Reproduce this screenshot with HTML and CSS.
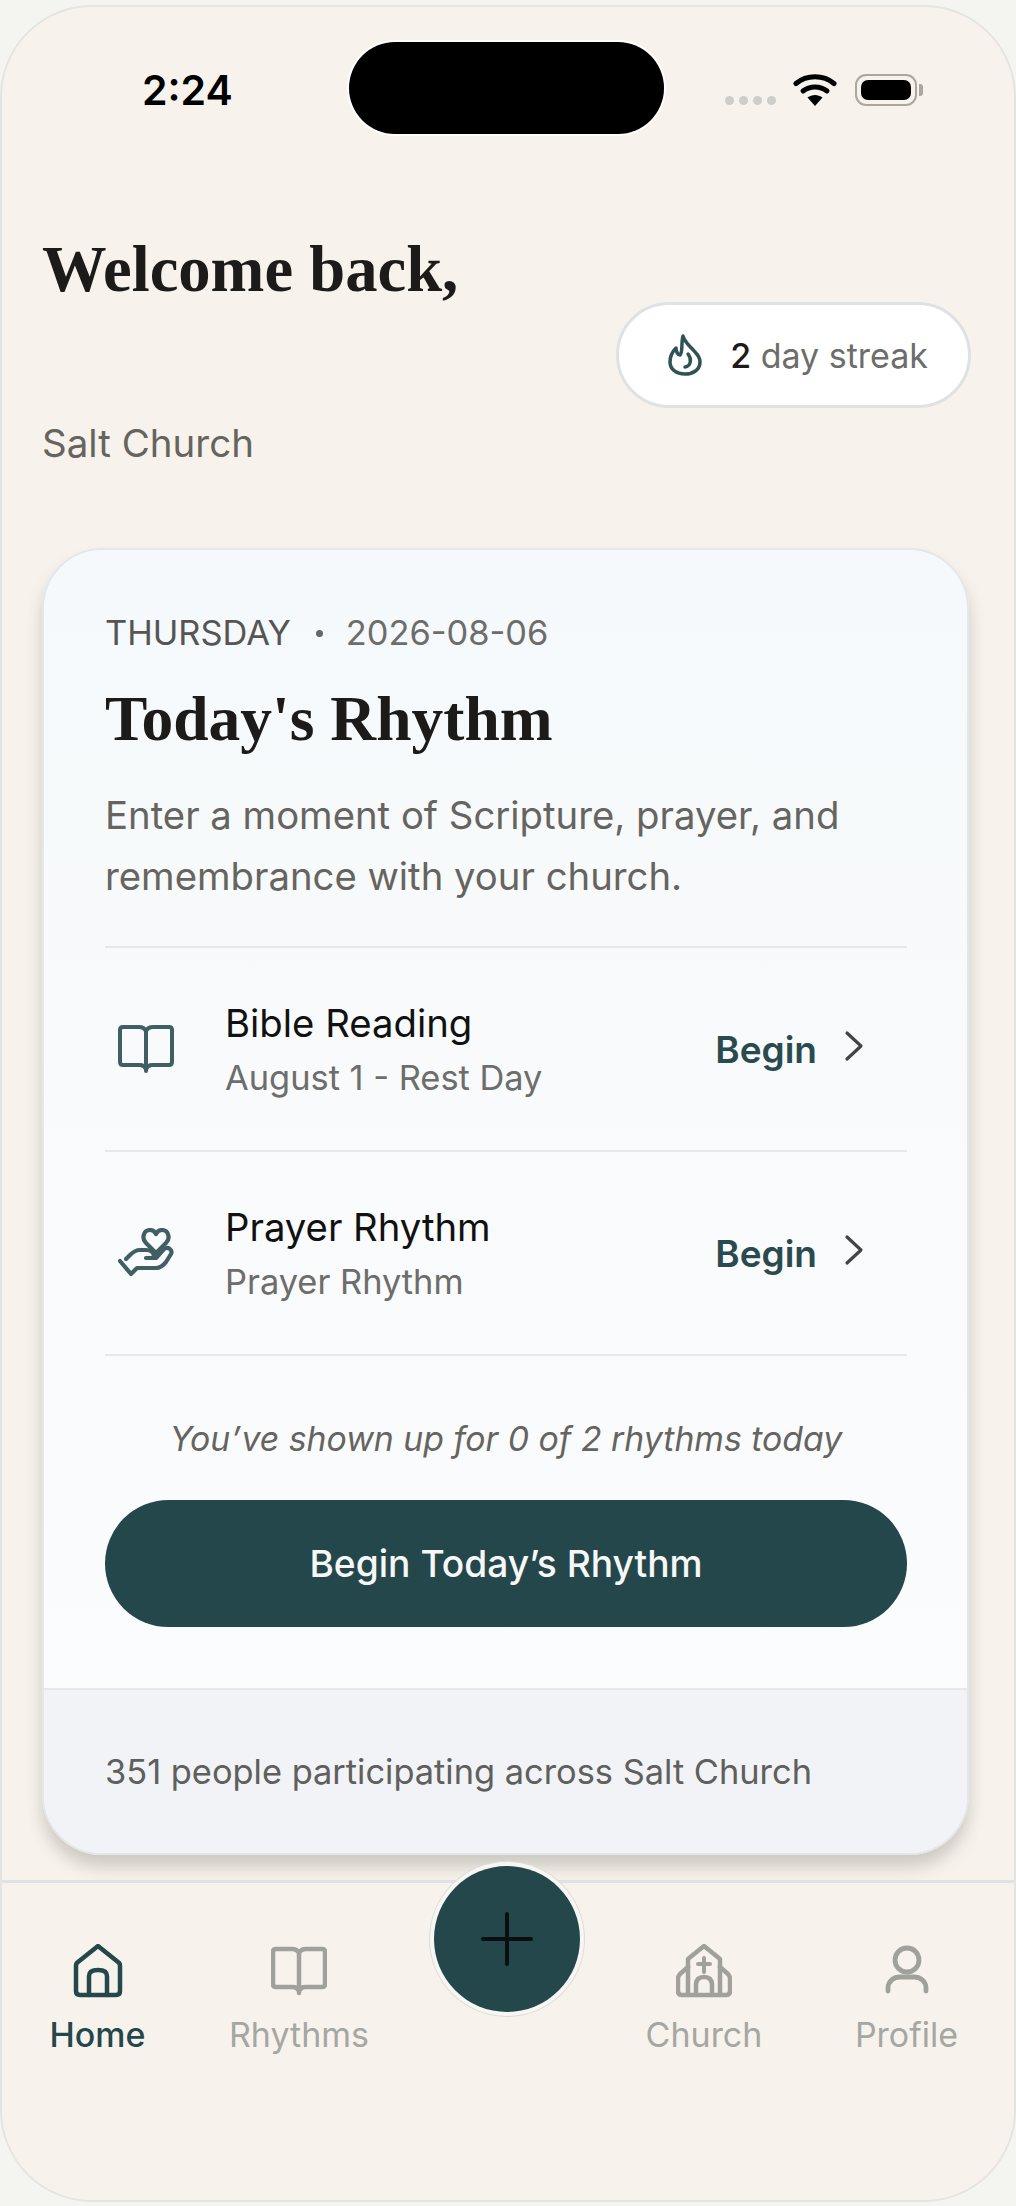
FILE: index.html
```html
<!DOCTYPE html>
<html lang="en">
<head>
  <meta charset="UTF-8" />
  <meta name="viewport" content="width=device-width, initial-scale=1" />
  <title>Salt Church – Home</title>
  <link rel="stylesheet" href="styles.css">
</head>
<body>
  <div class="phone">

    <!-- STATUS BAR -->
    <div class="status-bar">
      <span class="time">2:24</span>
      <div class="island"></div>
      <div class="status-icons">
        <span class="signal"><i></i><i></i><i></i><i></i></span>
        <svg class="wifi" width="44" height="34" viewBox="0 0 44 34" aria-hidden="true">
          <path d="M3 10.500C13.500 1.500 30.500 1.500 41 10.500" fill="none" stroke="#000" stroke-width="5" stroke-linecap="round"/>
          <path d="M10 18C16.500 12.500 27.500 12.500 34 18" fill="none" stroke="#000" stroke-width="5" stroke-linecap="round"/>
          <path d="M14.500 24.500C19 21 25 21 29.500 24.500L22 33Z" fill="#000"/>
        </svg>
        <span class="battery"><span class="battery-fill"></span></span>
      </div>
    </div>

    <!-- HEADER -->
    <header class="welcome">
      <div>
        <h1>Welcome back,</h1>
        <p class="church-name">Salt Church</p>
      </div>
      <div class="streak">
        <svg width="34" height="42" viewBox="0 0 34 42" fill="none" stroke="#2f5257" stroke-width="3.500" stroke-linecap="round" stroke-linejoin="round" aria-hidden="true">
          <path d="M15 2C17 9 22 12 27 18C31 22 32 25 32 28C32 36 25 40 17 40C8 40 2 35 2 28C2 22 5 17 8 14C8 18 10 21 12 21C15 18 13 9 15 2Z"/>
          <path d="M20 20C24 25 23 32 17 33"/>
        </svg>
        <span class="streak-text"><b>2</b> day streak</span>
      </div>
    </header>

    <!-- RHYTHM CARD -->
    <section class="card">
      <div class="card-body">
        <p class="date"><span class="day">THURSDAY</span><span class="dot"></span><span>2026-08-06</span></p>
        <h2>Today's Rhythm</h2>
        <p class="intro">Enter a moment of Scripture, prayer, and remembrance with your church.</p>

        <ul class="rhythm-list">
          <li class="rhythm">
            <svg class="rhythm-icon" width="56" height="48" viewBox="0 0 56 48" fill="none" stroke="#3f5f65" stroke-width="4" stroke-linecap="round" stroke-linejoin="round" aria-hidden="true">
              <path d="M28 6Q26 2 21 2H5Q2 2 2 5V37Q2 40 5 40H22Q26 40 28 44Q30 40 34 40H51Q54 40 54 37V5Q54 2 51 2H35Q30 2 28 6ZM28 6V46"/>
            </svg>
            <div class="rhythm-text">
              <h3>Bible Reading</h3>
              <p>August 1 - Rest Day</p>
            </div>
            <a class="begin" href="#">Begin</a>
            <svg class="chevron" width="20" height="32" viewBox="0 0 20 32" fill="none" stroke="#444" stroke-width="3.200" stroke-linecap="round" stroke-linejoin="round" aria-hidden="true"><path d="M3 3L17 16L3 29"/></svg>
          </li>
          <li class="rhythm">
            <svg class="rhythm-icon" width="56" height="50" viewBox="0 0 56 50" fill="none" stroke="#3f5f65" stroke-width="4.200" stroke-linecap="round" stroke-linejoin="round" aria-hidden="true">
              <path d="M38 25L28 15C23 10 26 2 32 2C35 2 37 4 38 6C39 4 41 2 44 2C50 2 53 10 48 15Z"/>
              <path d="M2 33L13 46L19 40H38C42 40 45 38 48 34L53 26C55 22 50 18 46 21L38 30H28"/>
              <path d="M36 29C36 24 32 22 28 22H22C18 22 15 24 12 27L8 31"/>
            </svg>
            <div class="rhythm-text">
              <h3>Prayer Rhythm</h3>
              <p>Prayer Rhythm</p>
            </div>
            <a class="begin" href="#">Begin</a>
            <svg class="chevron" width="20" height="32" viewBox="0 0 20 32" fill="none" stroke="#444" stroke-width="3.200" stroke-linecap="round" stroke-linejoin="round" aria-hidden="true"><path d="M3 3L17 16L3 29"/></svg>
          </li>
        </ul>

        <p class="progress">You’ve shown up for 0 of 2 rhythms today</p>
        <a class="btn" href="#">Begin Today’s Rhythm</a>
      </div>
      <div class="card-footer">351 people participating across Salt Church</div>
    </section>

    <!-- BOTTOM NAV -->
    <nav class="tabs">
      <a class="tab active" href="#">
        <svg width="50" height="54" viewBox="0 0 50 54" fill="none" stroke="currentColor" stroke-width="4.500" stroke-linecap="round" stroke-linejoin="round" aria-hidden="true">
          <path d="M3 47V22Q3 19 5 18L25 2L45 18Q47 19 47 22V47Q47 51 43 51H7Q3 51 3 47Z"/>
          <path d="M16 51V32Q16 26 25 26Q34 26 34 32V51"/>
        </svg>
        <span>Home</span>
      </a>
      <a class="tab" href="#">
        <svg width="56" height="54" viewBox="0 0 56 48" fill="none" stroke="#a0a09c" stroke-width="4.500" stroke-linecap="round" stroke-linejoin="round" aria-hidden="true">
          <path d="M28 6Q26 2 21 2H5Q2 2 2 5V37Q2 40 5 40H22Q26 40 28 44Q30 40 34 40H51Q54 40 54 37V5Q54 2 51 2H35Q30 2 28 6ZM28 6V46"/>
        </svg>
        <span>Rhythms</span>
      </a>
      <div class="tab-gap"></div>
      <a class="tab" href="#">
        <svg width="56" height="54" viewBox="0 0 56 54" fill="none" stroke="#a0a09c" stroke-width="4.500" stroke-linecap="round" stroke-linejoin="round" aria-hidden="true">
          <path d="M12 50V15L28 2L44 15V50"/>
          <path d="M12 23L4 30Q2 32 2 35V47Q2 51 6 51H50Q54 51 54 47V35Q54 32 52 30L44 23"/>
          <path d="M28 14V28M22 20H34" stroke-width="4"/>
          <path d="M20 51V41Q20 33 28 33Q36 33 36 41V51"/>
        </svg>
        <span>Church</span>
      </a>
      <a class="tab" href="#">
        <svg width="44" height="54" viewBox="0 0 44 54" fill="none" stroke="#a0a09c" stroke-width="4.800" stroke-linecap="round" stroke-linejoin="round" aria-hidden="true">
          <circle cx="22" cy="16" r="12"/>
          <path d="M3 47V44C3 37 9 33 15 33H29C35 33 41 37 41 44V47"/>
        </svg>
        <span>Profile</span>
      </a>
      <button class="fab" type="button" aria-label="Add">
        <svg width="52" height="54" viewBox="0 0 52 54" fill="none" stroke="#0b0f10" stroke-width="4" stroke-linecap="round" aria-hidden="true"><path d="M26 2V52M2 27H50"/></svg>
      </button>
    </nav>
  </div>
</body>
</html>
```

FILE: styles.css
```css
/* Reset & basics */
*, *::before, *::after {
  box-sizing: border-box;
}
body, h1, h2, h3, p, ul {
  margin: 0;
  padding: 0;
}
body {
  font-family: 'Inter', sans-serif;
  background: #f4f4f0;
  color: #1c1b19;
  padding-top: 5px;
}
a {
  text-decoration: none;
  color: inherit;
}

.phone {
  height: 2197px;
  background: #f7f3ec;
  border: 2px solid #e4e5e3;
  border-radius: 92px;
  overflow: hidden;
}

/* STATUS BAR */
.status-bar {
  display: grid;
  grid-template-columns: 347px 315px 1fr;
  align-items: center;
  padding-top: 35px;
}
.time {
  padding: 3px 0 0 140px;
  font-family: 'Inter', sans-serif;
  font-size: 41px;
  font-weight: 600;
  color: #000;
}
.island {
  height: 92px;
  background: #000;
  border-radius: 46px;
  box-shadow: 0 0 0 2px #fff;
}
.status-icons {
  display: flex;
  align-items: center;
  padding: 3px 0 0 61px;
}
.signal {
  display: flex;
  gap: 5px;
  margin-top: 22px;
}
.signal i {
  width: 9px;
  height: 9px;
  border-radius: 50%;
  background: #cfcdc9;
}
.wifi {
  margin-left: 17px;
  margin-right: 18px;
}
.battery {
  position: relative;
  width: 62px;
  height: 32px;
  padding: 4px;
  border: 2px solid #a9a79f;
  border-radius: 11px;
}
.battery::after {
  content: "";
  position: absolute;
  right: -8px;
  top: 8px;
  width: 4px;
  height: 12px;
  border-radius: 0 3px 3px 0;
  background: #a9a79f;
}
.battery-fill {
  display: block;
  height: 100%;
  background: #000;
  border-radius: 7px;
}

/* HEADER */
.welcome {
  display: flex;
  justify-content: space-between;
  align-items: center;
  margin-top: 94px;
  padding: 0 43px 0 40px;
}
h1 {
  font-family: 'Liberation Serif', serif;
  font-size: 64.6px;
  font-weight: 700;
  line-height: 82px;
  margin-bottom: 108px;
  color: #1c1b19;
}
.church-name {
  font-size: 38.5px;
  line-height: 50px;
  color: #66645f;
}
.streak {
  display: flex;
  align-items: center;
  gap: 28px;
  height: 106px;
  margin-top: 14px;
  padding: 0 40px 0 49px;
  background: #fff;
  border: 3px solid #dfe1e4;
  border-radius: 53px;
}
.streak-text {
  font-size: 34px;
  color: #6d6d6b;
}
.streak-text b {
  font-weight: 500;
  color: #1c1b19;
}

/* RHYTHM CARD */
.card {
  margin: 80px 45px 0 40px;
  background: linear-gradient(180deg, #f6f9fb 0%, #fbfcfd 100%);
  border: 2px solid #e4e7ea;
  border-radius: 60px;
  box-shadow: 0 12px 16px rgba(60, 58, 50, 0.22);
  overflow: hidden;
}
.card-body {
  padding: 58px 60px 61px 61px;
}
.date {
  display: flex;
  align-items: center;
  font-size: 34.4px;
  line-height: 50px;
  color: #6d6d6b;
}
.date .day {
  color: #555;
}
.date .dot {
  width: 7px;
  height: 7px;
  margin: 0 23px 0 25px;
  border-radius: 50%;
  background: #666;
}
h2 {
  font-family: 'Liberation Serif', serif;
  font-size: 63.5px;
  font-weight: 700;
  line-height: 80px;
  margin-top: 21px;
  color: #1c1b19;
}
.intro {
  font-size: 38.3px;
  line-height: 61px;
  margin-top: 26px;
  color: #66645f;
}
.rhythm-list {
  list-style: none;
  margin-top: 39px;
  border-top: 2px solid #e6e8ea;
}
.rhythm {
  display: flex;
  align-items: center;
  height: 204px;
  padding-left: 13px;
  border-bottom: 2px solid #e6e8ea;
}
.rhythm-text {
  flex: 1;
  margin-left: 51px;
  padding-top: 2px;
}
.rhythm-text h3 {
  font-size: 38.3px;
  font-weight: 400;
  line-height: 52px;
  color: #111;
}
.rhythm-text p {
  font-size: 34.4px;
  line-height: 50px;
  margin-top: 4px;
  color: #6d6d6b;
}
.begin {
  font-size: 37px;
  font-weight: 600;
  color: #2a4a4f;
}
.chevron {
  margin: 0 43px 6px 27px;
}
.progress {
  margin-top: 58px;
  font-size: 33.8px;
  font-style: italic;
  line-height: 50px;
  text-align: center;
  color: #66645f;
}
.btn {
  display: flex;
  justify-content: center;
  align-items: center;
  height: 127px;
  margin-top: 36px;
  background: #24474c;
  border-radius: 64px;
  font-size: 37.2px;
  font-weight: 500;
  color: #f6f7f6;
}
.card-footer {
  display: flex;
  align-items: center;
  height: 165px;
  padding-left: 61px;
  background: #f1f3f6;
  border-top: 2px solid #e6e8ec;
  font-size: 34.4px;
  color: #5f5f5d;
}

/* BOTTOM NAV */
.tabs {
  position: relative;
  display: grid;
  grid-template-columns: 191px 212px 1fr 202px 203px;
  margin-top: 25px;
  padding: 61px 6px 0 0;
  border-top: 3px solid #dfe2e5;
}
.tab {
  display: flex;
  flex-direction: column;
  align-items: center;
  font-size: 34px;
  line-height: 50px;
  color: #a6a6a3;
}
.tab svg {
  margin-bottom: 12px;
}
.tab.active {
  font-weight: 500;
  color: #24474c;
}
.fab {
  position: absolute;
  top: -17px;
  left: 432px;
  display: flex;
  justify-content: center;
  align-items: center;
  width: 146px;
  height: 146px;
  padding: 0;
  background: #24474c;
  border: none;
  border-radius: 50%;
  box-shadow: 0 0 0 4px #f7f6f2, 0 0 0 5px #dcdcda;
}
```
